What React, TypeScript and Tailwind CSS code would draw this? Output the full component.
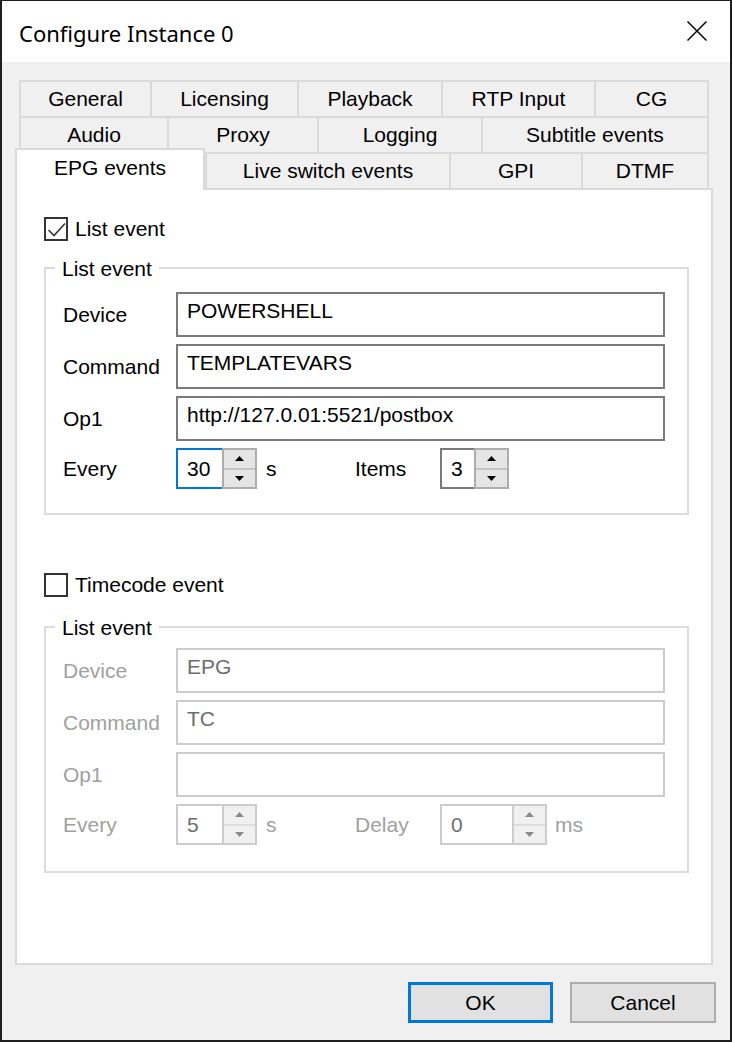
import React from "react";

type TabDef = { label: string; cls: string };

const row1: TabDef[] = [
  { label: "General", cls: "w-[131px]" },
  { label: "Licensing", cls: "w-[147px]" },
  { label: "Playback", cls: "w-[144px]" },
  { label: "RTP Input", cls: "w-[153px]" },
  { label: "CG", cls: "w-[115px] border-r-2" },
];
const row2: TabDef[] = [
  { label: "Audio", cls: "w-[148px]" },
  { label: "Proxy", cls: "w-[150px]" },
  { label: "Logging", cls: "w-[164px]" },
  { label: "Subtitle events", cls: "w-[228px] border-r-2" },
];
const row3: TabDef[] = [
  { label: "Live switch events", cls: "w-[244px]" },
  { label: "GPI", cls: "w-[132px]" },
  { label: "DTMF", cls: "w-[128px] border-r-2" },
];

function Tab({ t }: { t: TabDef }) {
  return (
    <div
      className={
        "shrink-0 h-full flex items-center justify-center border-t-2 border-l-2 border-[#dadada] bg-[#f0f0f0] " +
        t.cls
      }
    >
      {t.label}
    </div>
  );
}

function CheckBox({ checked, label }: { checked: boolean; label: string }) {
  return (
    <div className="flex items-center gap-[7px] h-[24px]">
      <div className="w-[24px] h-[24px] border-2 border-[#333333] bg-white shrink-0">
        {checked && (
          <svg width="20" height="20" viewBox="0 0 20 20">
            <polyline
              points="2.5,11 8,16.5 19,4.5"
              fill="none"
              stroke="#333333"
              strokeWidth="1.6"
            />
          </svg>
        )}
      </div>
      <span className="leading-[24px]">{label}</span>
    </div>
  );
}

function TextInput({ value, disabled }: { value: string; disabled?: boolean }) {
  return (
    <div
      className={
        "w-[489px] h-[45px] border-2 bg-white pl-[9px] pt-[5px] leading-[24px] whitespace-nowrap " +
        (disabled ? "border-[#cccccc] text-[#6d6d6d]" : "border-[#7a7a7a] text-black")
      }
    >
      {value}
    </div>
  );
}

function Arrow({ up, disabled }: { up: boolean; disabled?: boolean }) {
  return (
    <svg width="9" height="5" viewBox="0 0 9 5">
      <polygon
        points={up ? "0,5 4.5,0 9,5" : "0,0 9,0 4.5,5"}
        fill={disabled ? "#8a8a8a" : "#000000"}
      />
    </svg>
  );
}

function Spinner({
  value,
  inputCls,
  focused,
  disabled,
}: {
  value: string;
  inputCls: string;
  focused?: boolean;
  disabled?: boolean;
}) {
  const inputBorder = focused
    ? "border-[#0078d7]"
    : disabled
    ? "border-[#cccccc]"
    : "border-[#7a7a7a]";
  return (
    <div className="flex h-[41px] shrink-0">
      <div
        className={
          "h-full border-2 border-r-0 bg-white flex items-center pl-[9px] " +
          inputBorder +
          " " +
          inputCls +
          (disabled ? " text-[#6d6d6d]" : " text-black")
        }
      >
        {value}
      </div>
      <div
        className={
          "w-[35px] h-full border-2 flex flex-col gap-[2px] " +
          (disabled ? "border-[#cccccc] bg-[#dcdcdc]" : "border-[#adadad] bg-[#c4c4c4]")
        }
      >
        <div
          className={
            "flex-1 flex items-center justify-center " +
            (disabled ? "bg-[#f0f0f0]" : "bg-[#e5e5e5]")
          }
        >
          <Arrow up disabled={disabled} />
        </div>
        <div
          className={
            "flex-1 flex items-center justify-center " +
            (disabled ? "bg-[#f0f0f0]" : "bg-[#e5e5e5]")
          }
        >
          <Arrow up={false} disabled={disabled} />
        </div>
      </div>
    </div>
  );
}

function Row({ label, disabled, children }: { label: string; disabled?: boolean; children: React.ReactNode }) {
  return (
    <div className="flex items-center">
      <div className={"w-[113px] shrink-0 leading-[24px] " + (disabled ? "text-[#a0a0a0]" : "text-black")}>
        {label}
      </div>
      {children}
    </div>
  );
}

export default function App() {
  return (
    <div className="w-[732px] h-[1042px] bg-[#1f1f1f] pt-[1px] px-[2px] pb-[2px] flex flex-col font-['Liberation_Sans',Arial,sans-serif] text-[21px] text-black">
      {/* Title bar */}
      <div className="h-[61px] shrink-0 bg-white flex items-center justify-between pl-[17px] pr-[23px]">
        <span className="font-['Noto_Sans',sans-serif] text-[22px] leading-[30px] mt-[2px]">
          Configure Instance 0
        </span>
        <svg width="20" height="20" viewBox="0 0 20 20" className="mb-[2px]">
          <line x1="0.5" y1="0.5" x2="19.5" y2="19.5" stroke="#000" strokeWidth="1.5" />
          <line x1="19.5" y1="0.5" x2="0.5" y2="19.5" stroke="#000" strokeWidth="1.5" />
        </svg>
      </div>

      {/* Body */}
      <div className="flex-1 bg-[#f0f0f0] flex flex-col pt-[18px]">
        <div className="ml-[13px] w-[698px] flex flex-col">
          <div className="ml-[4px] h-[36px] flex">
            {row1.map((t) => (
              <Tab key={t.label} t={t} />
            ))}
          </div>
          <div className="ml-[4px] h-[36px] flex">
            {row2.map((t) => (
              <Tab key={t.label} t={t} />
            ))}
          </div>
          <div className="ml-[4px] h-[36px] flex">
            <div className="relative z-10 -ml-[4px] -mt-[4px] w-[190px] h-[42px] shrink-0 bg-white border-t-2 border-l-2 border-r-2 border-[#dadada] flex items-center justify-center pb-[4px]">
              EPG events
            </div>
            {row3.map((t) => (
              <Tab key={t.label} t={t} />
            ))}
          </div>

          {/* Tab page */}
          <div className="h-[777px] border-2 border-[#dadada] bg-white flex flex-col pl-[27px]">
            <div className="mt-[27px]">
              <CheckBox checked label="List event" />
            </div>

            <div className="relative mt-[26px] w-[645px] border-2 border-[#dcdcdc] pl-[17px] pt-[23px] pb-[24px] flex flex-col gap-[7px]">
              <div className="absolute -top-[12px] left-[9px] bg-white px-[7px] leading-[24px]">
                List event
              </div>
              <Row label="Device">
                <TextInput value="POWERSHELL" />
              </Row>
              <Row label="Command">
                <TextInput value="TEMPLATEVARS" />
              </Row>
              <Row label="Op1">
                <TextInput value="http://127.0.01:5521/postbox" />
              </Row>
              <Row label="Every">
                <Spinner value="30" inputCls="w-[46px]" focused />
                <div className="w-[98px] pl-[9px] shrink-0">s</div>
                <div className="w-[85px] shrink-0">Items</div>
                <Spinner value="3" inputCls="w-[34px]" />
              </Row>
            </div>

            <div className="mt-[58px]">
              <CheckBox checked={false} label="Timecode event" />
            </div>

            <div className="relative mt-[29px] w-[645px] border-2 border-[#dcdcdc] pl-[17px] pt-[20px] pb-[26px] flex flex-col gap-[7px]">
              <div className="absolute -top-[12px] left-[9px] bg-white px-[7px] leading-[24px]">
                List event
              </div>
              <Row label="Device" disabled>
                <TextInput value="EPG" disabled />
              </Row>
              <Row label="Command" disabled>
                <TextInput value="TC" disabled />
              </Row>
              <Row label="Op1" disabled>
                <TextInput value="" disabled />
              </Row>
              <Row label="Every" disabled>
                <Spinner value="5" inputCls="w-[46px]" disabled />
                <div className="w-[98px] pl-[9px] shrink-0 text-[#a0a0a0]">s</div>
                <div className="w-[85px] shrink-0 text-[#a0a0a0]">Delay</div>
                <Spinner value="0" inputCls="w-[72px]" disabled />
                <div className="ml-[8px] text-[#a0a0a0]">ms</div>
              </Row>
            </div>
          </div>
        </div>

        {/* Buttons */}
        <div className="mt-[17px] flex justify-end gap-[17px] pr-[14px]">
          <div className="w-[145px] h-[41px] border-[3px] border-[#0078d7] bg-[#e1e1e1] flex items-center justify-center">
            OK
          </div>
          <div className="w-[146px] h-[41px] border-2 border-[#adadad] bg-[#e1e1e1] flex items-center justify-center">
            Cancel
          </div>
        </div>
      </div>
    </div>
  );
}
